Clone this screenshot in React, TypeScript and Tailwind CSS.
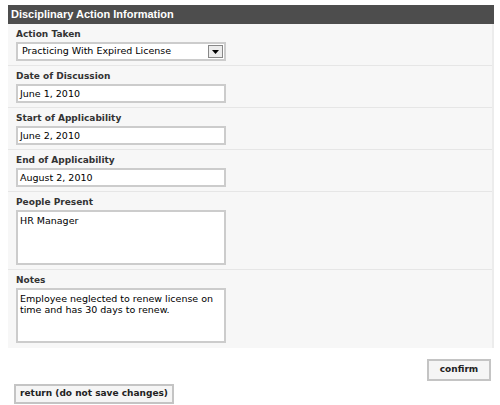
import React from 'react';

const font = { fontFamily: '"DejaVu Sans", Verdana, sans-serif' };

const Section = ({ label, children, last }: { label: string; children: React.ReactNode; last?: boolean }) => (
  <div className={last ? 'px-2 pt-[5px] pb-[5px]' : 'px-2 pt-[5px] pb-[4px] border-b border-[#e6e6e6]'}>
    <div className="text-[9px] font-bold text-[#333] leading-[11px] mb-[2px]">{label}</div>
    {children}
  </div>
);

const TextBox = ({ value }: { value: string }) => (
  <div className="w-[210px] h-[19px] bg-white border-2 border-[#cccccc] px-[2px] text-[9.5px] leading-[15px] text-black">
    {value}
  </div>
);

const TextArea = ({ value }: { value: string }) => (
  <div className="w-[210px] h-[55px] bg-white border-2 border-[#cccccc] px-[2px] pt-[3px] text-[9.5px] leading-[11px] text-black">
    {value}
  </div>
);

export default function App() {
  return (
    <div className="w-[500px] h-[405px] bg-white pt-[5px] pl-[8px] overflow-hidden" style={font}>
      <div className="w-[486px]">
        <div className="h-[19px] bg-[#4d4d4d] pl-[3px] text-white font-bold text-[11px] leading-[19px]" style={{ fontFamily: '"Liberation Sans", Arial, sans-serif' }}>
          Disciplinary Action Information
        </div>
        <div className="bg-[#f7f7f7] border-r-2 border-[#ececec] w-[486px]">
          <Section label="Action Taken">
            <div className="w-[210px] h-[19px] bg-white border-2 border-[#cccccc] flex items-center justify-between pl-[4px] pr-[1px] text-[9.5px] text-black">
              <span>Practicing With Expired License</span>
              <span className="w-[15px] h-[13px] bg-[#ececec] border border-[#888] flex items-center justify-center">
                <svg width="7" height="4" viewBox="0 0 7 4"><path d="M0 0h7L3.5 4z" fill="#000" /></svg>
              </span>
            </div>
          </Section>
          <Section label="Date of Discussion">
            <TextBox value="June 1, 2010" />
          </Section>
          <Section label="Start of Applicability">
            <TextBox value="June 2, 2010" />
          </Section>
          <Section label="End of Applicability">
            <TextBox value="August 2, 2010" />
          </Section>
          <Section label="People Present">
            <TextArea value="HR Manager" />
          </Section>
          <Section label="Notes" last>
            <TextArea value="Employee neglected to renew license on time and has 30 days to renew." />
          </Section>
        </div>
      </div>
      <div className="w-[486px] flex justify-end pt-[11px] pr-[3px]">
        <button className="w-[64px] h-[22px] bg-[#f5f5f5] border-2 border-[#c4c4c4] text-[9px] font-bold text-[#222]">confirm</button>
      </div>
      <div className="flex pl-[6px] pt-[3px]">
        <button className="w-[160px] h-[20px] bg-[#f5f5f5] border-2 border-[#c4c4c4] text-[9px] font-bold text-[#222]">return (do not save changes)</button>
      </div>
    </div>
  );
}
